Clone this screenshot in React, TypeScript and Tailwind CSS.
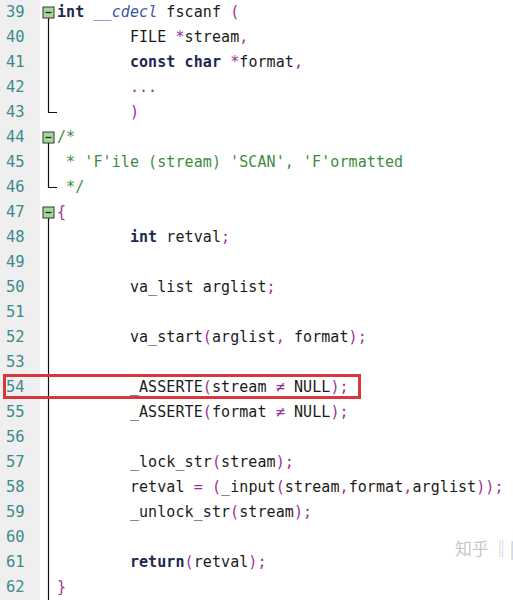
import React from "react";

type Seg = { t: string; c?: "kw" | "it" | "p" | "cm" };
type Fold = "start" | "mid" | "end" | "none";

const T = "        ";

const rows: { n: number; fold: Fold; segs: Seg[] }[] = [
  { n: 39, fold: "start", segs: [{ t: "int", c: "kw" }, { t: " " }, { t: "__cdecl", c: "it" }, { t: " fscanf " }, { t: "(", c: "p" }] },
  { n: 40, fold: "mid", segs: [{ t: T + "FILE " }, { t: "*", c: "p" }, { t: "stream" }, { t: ",", c: "p" }] },
  { n: 41, fold: "mid", segs: [{ t: T }, { t: "const", c: "kw" }, { t: " " }, { t: "char", c: "kw" }, { t: " " }, { t: "*", c: "p" }, { t: "format" }, { t: ",", c: "p" }] },
  { n: 42, fold: "mid", segs: [{ t: T }, { t: "...", c: "p" }] },
  { n: 43, fold: "end", segs: [{ t: T }, { t: ")", c: "p" }] },
  { n: 44, fold: "start", segs: [{ t: "/*", c: "cm" }] },
  { n: 45, fold: "mid", segs: [{ t: " * 'F'ile (stream) 'SCAN', 'F'ormatted", c: "cm" }] },
  { n: 46, fold: "end", segs: [{ t: " */", c: "cm" }] },
  { n: 47, fold: "start", segs: [{ t: "{", c: "p" }] },
  { n: 48, fold: "mid", segs: [{ t: T }, { t: "int", c: "kw" }, { t: " retval" }, { t: ";", c: "p" }] },
  { n: 49, fold: "mid", segs: [] },
  { n: 50, fold: "mid", segs: [{ t: T + "va_list arglist" }, { t: ";", c: "p" }] },
  { n: 51, fold: "mid", segs: [] },
  { n: 52, fold: "mid", segs: [{ t: T + "va_start" }, { t: "(", c: "p" }, { t: "arglist" }, { t: ",", c: "p" }, { t: " format" }, { t: ");", c: "p" }] },
  { n: 53, fold: "mid", segs: [] },
  { n: 54, fold: "mid", segs: [{ t: T + "_ASSERTE" }, { t: "(", c: "p" }, { t: "stream " }, { t: "≠", c: "p" }, { t: " NULL" }, { t: ");", c: "p" }] },
  { n: 55, fold: "mid", segs: [{ t: T + "_ASSERTE" }, { t: "(", c: "p" }, { t: "format " }, { t: "≠", c: "p" }, { t: " NULL" }, { t: ");", c: "p" }] },
  { n: 56, fold: "mid", segs: [] },
  { n: 57, fold: "mid", segs: [{ t: T + "_lock_str" }, { t: "(", c: "p" }, { t: "stream" }, { t: ");", c: "p" }] },
  { n: 58, fold: "mid", segs: [{ t: T + "retval " }, { t: "=", c: "p" }, { t: " " }, { t: "(", c: "p" }, { t: "_input" }, { t: "(", c: "p" }, { t: "stream" }, { t: ",", c: "p" }, { t: "format" }, { t: ",", c: "p" }, { t: "arglist" }, { t: "));", c: "p" }] },
  { n: 59, fold: "mid", segs: [{ t: T + "_unlock_str" }, { t: "(", c: "p" }, { t: "stream" }, { t: ");", c: "p" }] },
  { n: 60, fold: "mid", segs: [] },
  { n: 61, fold: "mid", segs: [{ t: T }, { t: "return", c: "kw" }, { t: "(", c: "p" }, { t: "retval" }, { t: ");", c: "p" }] },
  { n: 62, fold: "mid", segs: [{ t: "}", c: "p" }] },
];

const segClass = (c?: Seg["c"]) => {
  if (c === "kw") return "font-bold text-[#1c2850]";
  if (c === "it") return "italic text-[#3b56a8]";
  if (c === "p") return "text-[#9a3199]";
  if (c === "cm") return "text-[#3c8c3c]";
  return "text-[#1b1b1b]";
};

const FoldMark = ({ fold }: { fold: Fold }) => (
  <svg width="17" height="25" viewBox="0 0 17 25" className="block">
    {fold === "start" && (
      <>
        <line x1="8.5" y1="17" x2="8.5" y2="25" stroke="#111" strokeWidth="1.2" />
        <rect x="3" y="7" width="11" height="11" fill="#a8d4a0" stroke="#2b3b2b" strokeWidth="1" />
        <line x1="5.5" y1="12.5" x2="11.5" y2="12.5" stroke="#1b2b1b" strokeWidth="1.3" />
      </>
    )}
    {fold === "mid" && <line x1="8.5" y1="0" x2="8.5" y2="25" stroke="#111" strokeWidth="1.2" />}
    {fold === "end" && (
      <path d="M8.5 0 V12.5 H17" fill="none" stroke="#111" strokeWidth="1.2" />
    )}
  </svg>
);

export default function App() {
  return (
    <div className="relative w-[513px] h-[600px] overflow-hidden bg-white font-['DejaVu_Sans_Mono',monospace]">
      <div className="flex flex-col">
        {rows.map((r) => (
          <div key={r.n} className="flex h-[25px] items-stretch">
            <div className="w-[40px] shrink-0 bg-[#efefef] pl-[6px] text-[15.5px] leading-[25px] text-[#3d8a8e]">
              {r.n}
            </div>
            <div className="w-[17px] shrink-0">
              <FoldMark fold={r.fold} />
            </div>
            <div className="whitespace-pre text-[15px] leading-[25px] tracking-[0.08px]">
              {r.segs.map((s, i) => (
                <span key={i} className={segClass(s.c)}>
                  {s.t}
                </span>
              ))}
            </div>
          </div>
        ))}
      </div>
      <div className="absolute left-[3px] top-[374px] w-[358px] h-[25px] border-[3px] border-[#d8383c]" />
      <div className="absolute left-[455px] top-[536px] whitespace-nowrap text-[17px] leading-[24px] text-[#c8c8c8] font-['Noto_Sans_CJK_SC',sans-serif]">
        知乎 ‖|
      </div>
    </div>
  );
}
